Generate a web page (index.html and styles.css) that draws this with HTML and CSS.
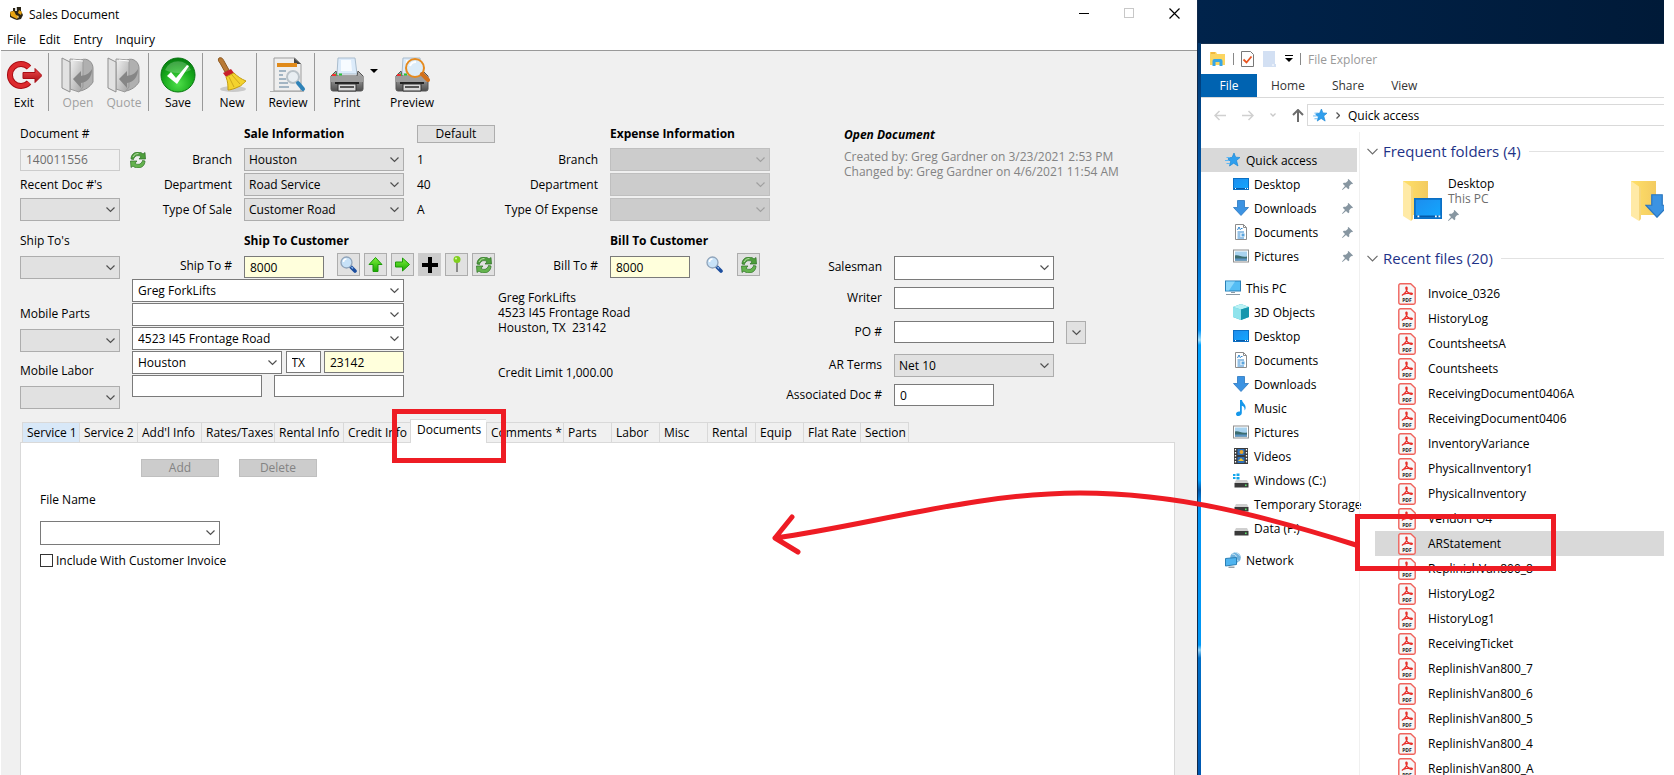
FILE: index.html
```html
<!DOCTYPE html>
<html lang="en">
<head>
<meta charset="utf-8">
<title>Sales Document</title>
<link rel="stylesheet" href="styles.css">
</head>
<body>
<svg class="defs" width="0" height="0" aria-hidden="true">
  <defs>
    <linearGradient id="g-steel" x1="0" y1="0" x2="0" y2="1"><stop offset="0" stop-color="#b9b9b9"/><stop offset=".5" stop-color="#8b8b8b"/><stop offset="1" stop-color="#4d4d4d"/></linearGradient>
    <linearGradient id="g-fold" x1="0" y1="0" x2="1" y2="1"><stop offset="0" stop-color="#f2f2f2"/><stop offset="1" stop-color="#a2a2a2"/></linearGradient>
    <radialGradient id="g-green" cx=".5" cy=".75" r=".75"><stop offset="0" stop-color="#4fe04a"/><stop offset=".6" stop-color="#16a81a"/><stop offset="1" stop-color="#067a10"/></radialGradient>
    <linearGradient id="g-red" x1="0" y1="0" x2="0" y2="1"><stop offset="0" stop-color="#ef4a4a"/><stop offset="1" stop-color="#a80d14"/></linearGradient>
    <linearGradient id="g-arrow" x1="0" y1="0" x2="0" y2="1"><stop offset="0" stop-color="#7df03c"/><stop offset="1" stop-color="#19a800"/></linearGradient>
    <linearGradient id="g-yellow" x1="0" y1="0" x2="1" y2="0"><stop offset="0" stop-color="#ffe069"/><stop offset="1" stop-color="#f3cb60"/></linearGradient>
    <linearGradient id="g-screen" x1="0" y1="0" x2="1" y2="1"><stop offset="0" stop-color="#1d8dee"/><stop offset="1" stop-color="#12a8ff"/></linearGradient>
    <symbol id="i-refresh" viewBox="0 0 16 16">
      <path d="M1 7C1 2.500 4.500 0 8 0c2 0 3.800.7 5 2l2-1.500.5 6.500H9l2-2.200C9.600 3.300 6.500 3 4.800 5 4 5.800 3.600 6.500 3.500 7.500z" fill="#4e9e3c" stroke="#2c6e24" stroke-width=".7"/>
      <path d="M15 9c0 4.500-3.500 7-7 7-2 0-3.800-.7-5-2L1 15.500.5 9H7l-2 2.200c1.400 1.500 4.500 1.800 6.200-.2.800-.8 1.200-1.500 1.300-2.500z" fill="#64b34e" stroke="#2c6e24" stroke-width=".7"/>
      <path d="M3 5c1-2.500 3.500-3.600 5.500-3.400" stroke="#bfe3ae" fill="none"/>
    </symbol>
    <symbol id="i-search" viewBox="0 0 17 17">
      <path d="M10 10l5 5" stroke="#1d4f9f" stroke-width="3.600" stroke-linecap="round"/>
      <path d="M11.500 11l1.500 1.500" stroke="#8fb8ec" stroke-width="1.200"/>
      <circle cx="6.500" cy="6.500" r="5.500" fill="#c7e2f8" stroke="#90a4ba" stroke-width="1.300"/>
      <path d="M3.500 6a3 3 0 0 1 3-3" stroke="#fff" stroke-width="1.500" fill="none"/>
    </symbol>
    <symbol id="i-star" viewBox="0 0 16 14">
      <path d="M9 0l1.600 4.200L15 4.500l-3.500 3 1.500 5.500-4.300-2.800L4.500 13l1.200-4.600L3 6.200l1-1.600h3z" fill="#2f9fee" stroke="#1a86d6" stroke-width=".7"/>
      <path d="M1.500 4.500H5M0 7.500h4M1.500 10.500H5" stroke="#5fb8f5" stroke-width="1"/>
    </symbol>
    <symbol id="i-desktop" viewBox="0 0 16 12">
      <rect x=".5" y=".5" width="15" height="11" fill="url(#g-screen)" stroke="#0b6fc4"/>
      <path d="M1 10.500h14" stroke="#065aa8"/><path d="M2 10.500h1M12 10.500h1M14 10.500h1" stroke="#fff"/>
    </symbol>
    <symbol id="i-down" viewBox="0 0 16 16">
      <path d="M4.500.5h7v7h4L8 15.500.5 7.500h4z" fill="#3c93e2" stroke="#2a76bf" stroke-width=".8"/>
    </symbol>
    <symbol id="i-doc" viewBox="0 0 16 16">
      <path d="M2.500.5h8l3 3v12h-11z" fill="#fff" stroke="#8c8c8c"/>
      <path d="M10.500.5v3h3" fill="none" stroke="#8c8c8c"/>
      <path d="M4.500 6l1.500-3 1.500 3M8 4.500h1.500M4.500 8H11M4.500 10h3M4.500 12h3M4.500 14H11" stroke="#2f86cf" fill="none"/>
      <path d="M8.500 9.500h3v3h-3z" fill="#5aa4dd"/>
    </symbol>
    <symbol id="i-pic" viewBox="0 0 16 13">
      <rect x=".5" y=".5" width="15" height="12" fill="#fff" stroke="#909090"/>
      <path d="M2 2h12v9H2z" fill="#a9d3ef"/><path d="M2 6c4-1 6 2 12 1v4H2z" fill="#3c6d70"/><path d="M2 9h12v2H2z" fill="#5d95c4"/>
    </symbol>
    <symbol id="i-pc" viewBox="0 0 16 15">
      <rect x=".5" y=".5" width="15" height="10" fill="#55bdf4" stroke="#2a7fb5"/><path d="M1 1h9l-6 9H1z" fill="#8ad7fb"/>
      <path d="M6 12h4M1 14h14" stroke="#8a9aa6" stroke-width="1.200"/>
    </symbol>
    <symbol id="i-cube" viewBox="0 0 16 16">
      <path d="M8 0l8 3v10l-8 3-8-3V3z" fill="#31b5c9"/><path d="M0 3l8 2.500V16l-8-3z" fill="#8fe3ec"/><path d="M8 0l8 3-8 2.500L0 3z" fill="#baf2f5"/><path d="M8 5.500L16 3v10l-8 3z" fill="#1596ad"/>
    </symbol>
    <symbol id="i-music" viewBox="0 0 16 16">
      <path d="M7 0h2c.2 3 4 4 3.600 8-.1 1-.6 2-1 2.400.3-2.500-.8-4-2.800-4.600V13c0 1.600-1.500 3-3.400 3C3.800 16 3 15 3 13.900c0-1.700 2-2.800 4-2.300z" fill="#1597ea"/>
    </symbol>
    <symbol id="i-video" viewBox="0 0 16 16">
      <rect x="1" y="0" width="14" height="16" fill="#3b3b3b"/><path d="M2.500 1v14M13.500 1v14" stroke="#fff" stroke-width="1.300" stroke-dasharray="1.500 1.500"/>
      <path d="M4.500 1h7v6h-7zM4.500 9h7v6h-7z" fill="#2e6fb8"/><circle cx="8.500" cy="4" r="2" fill="#e9a52c"/><path d="M5 13l3-3 3 3z" fill="#f1c12f"/>
    </symbol>
    <symbol id="i-drive" viewBox="0 0 16 16">
      <path d="M3 8h11l1.500 3H1.500z" fill="#cfcfcf"/><rect x="1.500" y="11" width="14" height="4.500" fill="#3a3a3a"/><rect x="12" y="12.500" width="1.600" height="1.600" fill="#5be36a"/>
    </symbol>
    <symbol id="i-cdrive" viewBox="0 0 16 16">
      <path d="M0 2h2.500v2H0zM3.500 1.500h3V4h-3zM0 5h2.500v2H0zM3.500 5h3v2.500h-3z" fill="#12a6ec"/>
      <path d="M3 8h11l1.500 3H1.500z" fill="#cfcfcf"/><rect x="1.500" y="11" width="14" height="4.500" fill="#3a3a3a"/><rect x="12" y="12.500" width="1.600" height="1.600" fill="#5be36a"/>
    </symbol>
    <symbol id="i-net" viewBox="0 0 16 16">
      <circle cx="10.500" cy="5.500" r="5.300" fill="#6fb1dc"/><path d="M7 2c3 0 5 2 4 4s3 2 3 4M10 0c2 1 4 2 5.500 4" stroke="#d5ebf7" fill="none"/>
      <path d="M.5 6.500l11-1v7l-11 1.500z" fill="#4fb4ef" stroke="#2a7fb5"/><path d="M3.500 15.200h6" stroke="#7b8a94" stroke-width="1.200"/>
    </symbol>
    <symbol id="i-pin" viewBox="0 0 11 11">
      <path d="M6.500 0L11 4.500l-1 .8-.8-.2-2 2.200.1 2L6.300 10.200 4 8 .5 11 0 10.500 3 7 .8 4.700l1-1 2 .1L6 1.800 5.700.8z" fill="#8796a1"/>
    </symbol>
    <symbol id="i-chev" viewBox="0 0 11 7"><path d="M.5.8l5 5 5-5" fill="none" stroke="#6b6b6b" stroke-width="1.200"/></symbol>
    <symbol id="i-pdf" viewBox="0 0 18 22">
      <path d="M2.500.8h10.200L17.200 5v14.500a1.700 1.700 0 0 1-1.700 1.700h-13A1.700 1.700 0 0 1 .8 19.500v-17A1.700 1.700 0 0 1 2.500.8z" fill="#f6f6f6" stroke="#f0635c" stroke-width="1.400"/>
      <path d="M4.500 12c2.800-1.500 5-5 4.600-7.200-.2-1.300-1.500-.8-1.200.6.500 2.400 2.500 5 5.300 5.900 1.400.3 1.700-1 .2-1.200-2.700-.2-5.800.2-8.300 1.400-.8.500-1 .9-.6.500z" fill="none" stroke="#e8302a" stroke-width="1.300"/>
      <text x="9" y="19" text-anchor="middle" class="pdf-tag">PDF</text>
    </symbol>
    <symbol id="i-folder" viewBox="0 0 25 40">
      <path d="M0 0h25v34H0z" fill="url(#g-yellow)"/><path d="M0 0l8 5.500V40l-8-5z" fill="#ffeaa6"/><path d="M8 5.500l2 1.500v31l-2 2z" fill="#f6d67a"/>
    </symbol>
    <symbol id="i-openbook" viewBox="0 0 34 36">
      <path d="M20 3c7-3 12 3 12 8v14c-3 5-8 8-13 9z" fill="#b0b0b0" stroke="#909090"/>
      <path d="M9 2l13 1v27l-4 5-9-3z" fill="url(#g-fold)" stroke="#9a9a9a"/>
      <path d="M1 1l8 4v30l-8-4z" fill="#e2e2e2" stroke="#8f8f8f"/>
      <path d="M20 14l-8 8 8 9v-5c6-1 11-5 11-14-3 5-6 6-11 7z" fill="#868686"/>
      <path d="M12 3l10 1" stroke="#fff"/>
    </symbol>
    <symbol id="i-printer" viewBox="0 0 36 36">
      <path d="M9 1h17l2 16H8z" fill="#dcebfa" stroke="#a9bccd"/><path d="M12 3h10l1 11H12z" fill="#f7fbff"/>
      <path d="M7 14L2 19v13a2 2 0 0 0 2 2h28a2 2 0 0 0 2-2V19l-5-5-1 5H8z" fill="url(#g-steel)" stroke="#555"/>
      <path d="M1 19h34v6H1z" fill="#9d9d9d"/><path d="M3 18l5-.5M10 17.500h3" stroke="#2bc13a" stroke-width="2"/><path d="M3 18h4" stroke="#e33" stroke-width="2"/>
      <path d="M6 25h24v2H6z" fill="#222"/><path d="M9 27h18v7H9z" fill="#d9d9d9" stroke="#333"/><path d="M11 30h14" stroke="#555" stroke-width="2"/>
    </symbol>
  </defs>
</svg>

<div class="screen">
<main class="app">
  <header class="titlebar">
    <svg width="15" height="14" viewBox="0 0 15 14"><path d="M1 5l3-1V1h2v3l2-4h4v4l2 4-2 4-4 1-3-1-4-2z" fill="#2a2416"/><path d="M1 5l4-1 2 4 3 1-2 3-6-3zM10 3l3 2-1 3-3-2z" fill="#e8a413"/><path d="M6 1h2v3H6zM8 9l2 1-1 1z" fill="#d8d8d8"/></svg>
    <h1>Sales Document</h1>
    <div class="winbtns">
      <button type="button" aria-label="Minimize"><svg width="11" height="11"><path d="M0 5.500h10" stroke="#000"/></svg></button>
      <button type="button" aria-label="Maximize" disabled><svg width="11" height="11"><rect x=".5" y=".5" width="9" height="9" fill="none" stroke="#c8c8c8"/></svg></button>
      <button type="button" aria-label="Close"><svg width="11" height="11"><path d="M.5.500l10 10m0-10l-10 10" stroke="#000" stroke-width="1.200"/></svg></button>
    </div>
  </header>
  <nav class="menu"><a href="#">File</a><a href="#">Edit</a><a href="#">Entry</a><a href="#">Inquiry</a></nav>

  <div class="toolbar">
    <button type="button" class="tool"><svg width="36" height="36" viewBox="0 0 36 36"><path d="M23 10.500a11 11 0 1 0 0 15" fill="none" stroke="#a80d14" stroke-width="6"/><path d="M23 10.500a11 11 0 1 0 0 15" fill="none" stroke="#dd2a2e" stroke-width="4"/><path d="M17 15.500h12v-4l7 7-7 7v-4H17z" fill="url(#g-red)" stroke="#a80d14"/></svg>Exit</button>
    <i class="sep"></i>
    <button type="button" class="tool" disabled><svg width="34" height="36"><use href="#i-openbook"/></svg>Open</button>
    <button type="button" class="tool" disabled><svg width="34" height="36"><use href="#i-openbook"/></svg>Quote</button>
    <i class="sep"></i>
    <button type="button" class="tool"><svg width="36" height="36" viewBox="0 0 36 36"><circle cx="18" cy="18" r="17" fill="url(#g-green)" stroke="#06770f"/><path d="M5 13a14 14 0 0 1 26 0c-8 4-18 4-26 0z" fill="#fff" opacity=".22"/><path d="M7 19l4-4 5 6L27 8l2 1-12 18z" fill="#fff"/></svg>Save</button>
    <i class="sep"></i>
    <button type="button" class="tool"><svg width="30" height="36" viewBox="0 0 30 36"><ellipse cx="16" cy="32" rx="13" ry="3" fill="#c9c9c9"/><path d="M2 1c3-1 4 1 5 3l5 9-4 2-5-9C1 4 1 2 2 1z" fill="#b97a35" stroke="#8d5a22"/><path d="M6 16l8-4 3 4-8 4z" fill="#c8202a"/><path d="M9 20l8-4c3 3 7 6 12 8-3 2-4 5-8 6-4 2-8 3-10 3 0-4 0-8-2-13z" fill="#f4d32e" stroke="#c39c12"/><path d="M12 20l5 10M15 18l8 9" stroke="#cfa81c"/></svg>New</button>
    <i class="sep"></i>
    <button type="button" class="tool wide"><svg width="36" height="36" viewBox="0 0 36 36"><path d="M4 1h21l6 6v27H4z" fill="#eeeeee" stroke="#9d9d9d"/><path d="M24 1v6h7z" fill="#444"/><path d="M7 6h20v4H7z" fill="#e08a1a"/><path d="M9 14h7M9 18h4M9 22h7M9 26h9M9 30h10" stroke="#8ba2b5" stroke-width="1.500"/><circle cx="23" cy="20" r="6" fill="#e8eef2" stroke="#b9c2c8" stroke-width="2"/><path d="M28 26l5 6" stroke="#2f83b8" stroke-width="4" stroke-linecap="round"/><path d="M0 34.500h34" stroke="#b0b0b0"/></svg>Review</button>
    <i class="sep"></i>
    <button type="button" class="tool print"><svg width="36" height="36"><use href="#i-printer"/></svg>Print</button>
    <button type="button" class="drop" aria-label="Print options"><svg width="8" height="4"><path d="M0 0h8l-4 4z"/></svg></button>
    <button type="button" class="tool preview"><svg width="36" height="36" viewBox="0 0 36 36"><use href="#i-printer" width="36" height="36"/><circle cx="21" cy="11" r="9" fill="#dcecf8" stroke="#e58a1f" stroke-width="2"/><path d="M16 9a6 6 0 0 1 6-4" stroke="#fff" stroke-width="2" fill="none"/><path d="M28 17l6 6" stroke="#d2701a" stroke-width="4" stroke-linecap="round"/></svg>Preview</button>
  </div>

  <form class="form">
    <div class="band band-doc">
      <label class="a" for="docno">Document #</label>
      <strong class="f1">Sale Information</strong>
      <button type="button" class="btn v1">Default</button>
      <strong class="f2">Expense Information</strong>

      <input class="a" id="docno" value="140011556" disabled>
      <svg class="refresh" width="16" height="16"><use href="#i-refresh"/></svg>
      <label class="l1" for="s-branch">Branch</label><select class="f1" id="s-branch"><option>Houston</option></select><span class="v1">1</span>
      <label class="l2" for="e-branch">Branch</label><select class="f2" id="e-branch" disabled><option></option></select>

      <label class="a" for="recent">Recent Doc #'s</label>
      <label class="l1" for="s-dept">Department</label><select class="f1" id="s-dept"><option>Road Service</option></select><span class="v1">40</span>
      <label class="l2" for="e-dept">Department</label><select class="f2" id="e-dept" disabled><option></option></select>

      <select class="a" id="recent"><option></option></select>
      <label class="l1" for="s-type">Type Of Sale</label><select class="f1" id="s-type"><option>Customer Road</option></select><span class="v1">A</span>
      <label class="l2" for="e-type">Type Of Expense</label><select class="f2" id="e-type" disabled><option></option></select>

      <div class="status"><h2>Open Document</h2><p>Created by: Greg Gardner on 3/23/2021 2:53 PM<br>Changed by: Greg Gardner on 4/6/2021 11:54 AM</p></div>
    </div>

    <div class="band band-cust">
      <div class="picks">
        <div class="pick"><label for="shiptos">Ship To's</label><select id="shiptos"><option></option></select></div>
        <div class="pick"><label for="mparts">Mobile Parts</label><select id="mparts"><option></option></select></div>
        <div class="pick"><label for="mlabor">Mobile Labor</label><select id="mlabor"><option></option></select></div>
      </div>

      <div class="ship">
        <strong>Ship To Customer</strong>
        <div class="lookup">
          <label for="shipno">Ship To #</label><input class="key" id="shipno" value="8000">
          <div class="icons">
            <button type="button" class="ico" aria-label="Find"><svg width="17" height="17"><use href="#i-search"/></svg></button>
            <button type="button" class="ico" aria-label="Up"><svg width="15" height="15" viewBox="0 0 15 15"><path d="M7.500.5l6.500 7h-4v7H5v-7H1z" fill="url(#g-arrow)" stroke="#1d9a08"/></svg></button>
            <button type="button" class="ico" aria-label="Next"><svg width="15" height="15" viewBox="0 0 15 15"><path d="M14.500 7.500l-7 6.500v-4h-7V5h7V1z" fill="url(#g-arrow)" stroke="#1d9a08"/></svg></button>
            <button type="button" class="ico dark" aria-label="Add"><svg width="16" height="16"><path d="M8 0v16M0 8h16" stroke="#000" stroke-width="4"/></svg></button>
            <button type="button" class="ico" aria-label="Map"><svg width="8" height="17"><path d="M4 6v10" stroke="#8a8a8a" stroke-width="2"/><circle cx="4" cy="3.500" r="3.500" fill="#7fcf1d"/><circle cx="3" cy="2.500" r="1" fill="#e0f8b0"/></svg></button>
            <button type="button" class="ico" aria-label="Refresh"><svg width="16" height="16"><use href="#i-refresh"/></svg></button>
          </div>
        </div>
        <div class="addr">
          <select class="edit" aria-label="Name"><option>Greg ForkLifts</option></select>
          <select class="edit" aria-label="Address 1"><option></option></select>
          <select class="edit" aria-label="Address 2"><option>4523 I45 Frontage Road</option></select>
          <div class="city"><select class="edit" aria-label="City"><option>Houston</option></select><input aria-label="State" value="TX"><input class="key" aria-label="Zip" value="23142"></div>
          <div class="pair"><input aria-label="Contact"><input aria-label="Phone"></div>
        </div>
      </div>

      <div class="bill">
        <strong>Bill To Customer</strong>
        <div class="lookup">
          <label for="billno">Bill To #</label><input class="key" id="billno" value="8000">
          <div class="icons">
            <button type="button" class="ico flat" aria-label="Find"><svg width="17" height="17"><use href="#i-search"/></svg></button>
            <button type="button" class="ico" aria-label="Refresh"><svg width="16" height="16"><use href="#i-refresh"/></svg></button>
          </div>
        </div>
        <address>Greg ForkLifts<br>4523 I45 Frontage Road<br>Houston, TX&nbsp; 23142</address>
        <p class="credit">Credit Limit 1,000.00</p>
      </div>

      <div class="terms">
        <label for="sman">Salesman</label><select class="edit tall" id="sman"><option></option></select>
        <label for="writer">Writer</label><input id="writer">
        <label for="po">PO #</label><input id="po"><select class="mini" aria-label="PO list"><option></option></select>
        <label for="ar">AR Terms</label><select id="ar"><option>Net 10</option></select>
        <label for="assoc">Associated Doc #</label><input class="short" id="assoc" value="0">
      </div>
    </div>
  </form>

  <div class="tabs" role="tablist">
    <button type="button" role="tab" class="hot">Service 1</button><button type="button" role="tab">Service 2</button><button type="button" role="tab">Add'l Info</button><button type="button" role="tab">Rates/Taxes</button><button type="button" role="tab">Rental Info</button><button type="button" role="tab">Credit Info</button><button type="button" role="tab" class="on" aria-selected="true">Documents</button><button type="button" role="tab">Comments *</button><button type="button" role="tab">Parts</button><button type="button" role="tab">Labor</button><button type="button" role="tab">Misc</button><button type="button" role="tab">Rental</button><button type="button" role="tab">Equip</button><button type="button" role="tab">Flat Rate</button><button type="button" role="tab">Section</button>
  </div>
  <section class="panel" role="tabpanel">
    <div class="actions"><button type="button" class="btn" disabled>Add</button><button type="button" class="btn" disabled>Delete</button></div>
    <label for="fname">File Name</label>
    <select class="edit tall" id="fname"><option></option></select>
    <label class="check"><input type="checkbox">Include With Customer Invoice</label>
  </section>
</main>

<div class="desk">
<aside class="explorer">
  <header class="etitle">
    <svg width="17" height="15" viewBox="0 0 17 15"><path d="M1 0h6l1 2h8v11H1z" fill="#fbd561"/><path d="M2 1h4" stroke="#e89c1c"/><path d="M3.500 14V9a2 2 0 0 1 2-2h6a2 2 0 0 1 2 2v5h-3v-4h-4v4z" fill="#36a6e6"/></svg>
    <i></i>
    <svg width="13" height="16" viewBox="0 0 13 16"><path d="M.5.5h9l3 3v12H.5z" fill="#fdfdfd" stroke="#777"/><path d="M2.500 8.500l3 3 5-6" fill="none" stroke="#e8531f" stroke-width="1.800"/></svg>
    <svg width="13" height="16" viewBox="0 0 13 16"><path d="M0 0h12v13h1v3H0z" fill="#d3e0f3"/><path d="M9 14h2" stroke="#fff"/></svg>
    <svg width="8" height="8" viewBox="0 0 8 8"><path d="M0 .5h8" stroke="#000"/><path d="M0 3h8L4 7z"/></svg>
    <i></i>
    <h2>File Explorer</h2>
  </header>
  <nav class="ribbon"><a href="#" class="file">File</a><a href="#">Home</a><a href="#">Share</a><a href="#">View</a></nav>
  <div class="where">
    <svg width="12" height="11" viewBox="0 0 12 11"><path d="M5.500 1L1 5.500 5.500 10M1 5.500h11" fill="none" stroke="#d0d0d0" stroke-width="1.500"/></svg>
    <svg width="12" height="11" viewBox="0 0 12 11"><path d="M6.500 1L11 5.500 6.500 10M11 5.500H0" fill="none" stroke="#d0d0d0" stroke-width="1.500"/></svg>
    <svg width="6" height="4" viewBox="0 0 6 4"><path d="M.5.5L3 3 5.500.5" fill="none" stroke="#c8c8c8" stroke-width="1.300"/></svg>
    <svg width="12" height="13" viewBox="0 0 12 13"><path d="M1 6l5-5 5 5M6 1v12" fill="none" stroke="#6c6c6c" stroke-width="2"/></svg>
    <div class="path"><svg width="15" height="13"><use href="#i-star"/></svg><svg width="4" height="7" viewBox="0 0 4 7"><path d="M.5.5l3 3-3 3" fill="none" stroke="#555" stroke-width="1.300"/></svg>Quick access</div>
  </div>
  <div class="ebody">
    <nav class="tree">
      <a href="#" class="root cur"><svg><use href="#i-star"/></svg><span>Quick access</span></a>
      <a href="#"><svg><use href="#i-desktop"/></svg><span>Desktop</span><svg class="pin"><use href="#i-pin"/></svg></a>
      <a href="#"><svg><use href="#i-down"/></svg><span>Downloads</span><svg class="pin"><use href="#i-pin"/></svg></a>
      <a href="#"><svg><use href="#i-doc"/></svg><span>Documents</span><svg class="pin"><use href="#i-pin"/></svg></a>
      <a href="#"><svg><use href="#i-pic"/></svg><span>Pictures</span><svg class="pin"><use href="#i-pin"/></svg></a>
      <a href="#" class="root"><svg><use href="#i-pc"/></svg><span>This PC</span></a>
      <a href="#"><svg><use href="#i-cube"/></svg><span>3D Objects</span></a>
      <a href="#"><svg><use href="#i-desktop"/></svg><span>Desktop</span></a>
      <a href="#"><svg><use href="#i-doc"/></svg><span>Documents</span></a>
      <a href="#"><svg><use href="#i-down"/></svg><span>Downloads</span></a>
      <a href="#"><svg><use href="#i-music"/></svg><span>Music</span></a>
      <a href="#"><svg><use href="#i-pic"/></svg><span>Pictures</span></a>
      <a href="#"><svg><use href="#i-video"/></svg><span>Videos</span></a>
      <a href="#"><svg><use href="#i-cdrive"/></svg><span>Windows (C:)</span></a>
      <a href="#"><svg><use href="#i-drive"/></svg><span>Temporary Storage</span></a>
      <a href="#"><svg><use href="#i-drive"/></svg><span>Data (F:)</span></a>
      <a href="#" class="root"><svg><use href="#i-net"/></svg><span>Network</span></a>
    </nav>
    <div class="content">
      <h3><svg width="11" height="7"><use href="#i-chev"/></svg>Frequent folders (4)</h3>
      <div class="folders">
        <a href="#" class="folder"><svg width="40" height="40" viewBox="0 0 40 40"><use href="#i-folder" width="25" height="40"/><use href="#i-desktop" x="11" y="17" width="28" height="21"/></svg><span>Desktop<small>This PC</small><svg width="11" height="11"><use href="#i-pin"/></svg></span></a>
        <a href="#" class="folder" aria-label="Downloads"><svg width="40" height="40" viewBox="0 0 40 40"><use href="#i-folder" width="25" height="40"/><use href="#i-down" x="14" y="13" width="24" height="24"/></svg></a>
      </div>
      <h3><svg width="11" height="7"><use href="#i-chev"/></svg>Recent files (20)</h3>
      <ul class="files">
        <li><svg><use href="#i-pdf"/></svg>Invoice_0326</li>
        <li><svg><use href="#i-pdf"/></svg>HistoryLog</li>
        <li><svg><use href="#i-pdf"/></svg>CountsheetsA</li>
        <li><svg><use href="#i-pdf"/></svg>Countsheets</li>
        <li><svg><use href="#i-pdf"/></svg>ReceivingDocument0406A</li>
        <li><svg><use href="#i-pdf"/></svg>ReceivingDocument0406</li>
        <li><svg><use href="#i-pdf"/></svg>InventoryVariance</li>
        <li><svg><use href="#i-pdf"/></svg>PhysicalInventory1</li>
        <li><svg><use href="#i-pdf"/></svg>PhysicalInventory</li>
        <li><svg><use href="#i-pdf"/></svg>VendorPO4</li>
        <li class="sel"><svg><use href="#i-pdf"/></svg>ARStatement</li>
        <li><svg><use href="#i-pdf"/></svg>ReplinishVan800_8</li>
        <li><svg><use href="#i-pdf"/></svg>HistoryLog2</li>
        <li><svg><use href="#i-pdf"/></svg>HistoryLog1</li>
        <li><svg><use href="#i-pdf"/></svg>ReceivingTicket</li>
        <li><svg><use href="#i-pdf"/></svg>ReplinishVan800_7</li>
        <li><svg><use href="#i-pdf"/></svg>ReplinishVan800_6</li>
        <li><svg><use href="#i-pdf"/></svg>ReplinishVan800_5</li>
        <li><svg><use href="#i-pdf"/></svg>ReplinishVan800_4</li>
        <li><svg><use href="#i-pdf"/></svg>ReplinishVan800_A</li>
      </ul>
    </div>
  </div>
</aside>
</div>
</div>

<svg class="markup" width="1674" height="775" viewBox="0 0 1674 775" aria-hidden="true">
  <g fill="none" stroke="#ee1c24" stroke-width="5">
    <rect x="394.500" y="411.500" width="109" height="49"/>
    <rect x="1357.500" y="516.500" width="196" height="52"/>
    <path stroke-linecap="round" stroke-linejoin="round" d="M1356 545C1270 518 1180 493 1080 493C975 493 870 525 775 538M792 517L775 538L798 552"/>
  </g>
</svg>
</body>
</html>
```
FILE: styles.css
```css
* { box-sizing: border-box; }
body {
  margin: 0;
  height: 100vh;
  overflow: hidden;
  background: #fff;
  color: #000;
  font: 12px/15px "Open Sans", "Noto Sans", sans-serif;
}
button, input, select { font: inherit; color: inherit; margin: 0; }
h1, h2, h3, p { margin: 0; font-size: 12px; font-weight: 400; }
a { color: inherit; text-decoration: none; }
label, strong, button, span { white-space: nowrap; }
.defs { position: absolute; }
.markup { position: absolute; top: 0; left: 0; z-index: 2; pointer-events: none; }

.screen { display: grid; grid-template-columns: minmax(0, 1fr) 467px; height: 100%; padding-right: 10px; }

/* Sales document window */
.app { display: flex; flex-direction: column; min-height: 0; background: #f0f0f0; border-left: 1px solid #fff; }
.titlebar { display: flex; align-items: center; height: 28px; padding-left: 8px; background: #fff; }
.titlebar h1 { margin-left: 5px; flex: 1; }
.winbtns { display: flex; }
.winbtns button { width: 45px; height: 28px; padding: 0; border: 0; background: none; }
.menu { display: flex; gap: 13px; height: 23px; padding: 4px 6px 0; background: #fff; border-bottom: 1px solid #999; }

.toolbar { display: flex; height: 61px; padding-top: 2px; }
.tool { display: flex; flex-direction: column; align-items: center; gap: 2px; width: 46px; padding: 4px 0 0; border: 0; background: none; }
.tool:disabled { color: #a0a0a0; }
.wide { width: 50px; }
.print { width: 44px; margin-left: 4px; }
.preview { width: 66px; }
.sep { width: 1px; height: 58px; margin: 0 6px 0 1px; background: #999; }
.drop { align-self: flex-start; width: 10px; padding: 14px 0 0; border: 0; background: none; line-height: 4px; }

.form { padding: 9px 19px 0; }
.btn { width: 78px; height: 18px; padding: 0; background: #e1e1e1; border: 1px solid #adadad; line-height: 16px; }
.btn:disabled { background: #ccc; border-color: #bfbfbf; color: #838383; }
input, select { width: 100%; height: 22px; padding: 0 5px; border: 1px solid #7a7a7a; border-radius: 0; background: #fff; }
input:disabled { background: #f0f0f0; border-color: #ccc; color: #6d6d6d; }
select {
  appearance: none;
  height: 23px;
  padding: 0 20px 0 4px;
  border-color: #adadad;
  background: #e1e1e1 url("data:image/svg+xml,%3Csvg xmlns='http://www.w3.org/2000/svg' width='9' height='6'%3E%3Cpath d='M.5.5l4 4 4-4' fill='none' stroke='%23505050' stroke-width='1.200'/%3E%3C/svg%3E") no-repeat right 4px center;
}
select:disabled { opacity: 1; border-color: #bfbfbf; background-color: #ccc; background-image: url("data:image/svg+xml,%3Csvg xmlns='http://www.w3.org/2000/svg' width='9' height='6'%3E%3Cpath d='M.5.5l4 4 4-4' fill='none' stroke='%23a0a0a0' stroke-width='1.200'/%3E%3C/svg%3E"); }
select.edit { background-color: #fff; border-color: #7a7a7a; padding-left: 5px; }
select.tall { height: 24px; }
.key { background: #ffffdc; }

.band-doc {
  display: grid;
  grid-template-columns: 100px 26px 86px 12px 160px 13px 78px 103px 12px 160px 74px auto;
  grid-template-rows: 25px repeat(3, 23px);
  row-gap: 2px;
  align-items: center;
  justify-content: start;
}
.a { grid-column: 1; }
.refresh { grid-column: 2; justify-self: end; }
.l1 { grid-column: 3; justify-self: end; }
.f1 { grid-column: 5; }
.v1 { grid-column: 7; }
.l2 { grid-column: 8; justify-self: end; }
.f2 { grid-column: 10; }
.status { grid-column: 12; grid-row: 1 / span 3; align-self: start; padding-top: 6px; white-space: nowrap; }
.status h2 { font-weight: 700; font-style: italic; margin-bottom: 7px; }
.status p { color: #838383; }

.band-cust { display: flex; padding-top: 11px; }
.picks { width: 112px; padding-right: 12px; }
.pick { display: flex; flex-direction: column; gap: 6px; margin-bottom: 10px; line-height: 18px; }
.pick:first-child { margin-bottom: 26px; }
.pick:last-child { margin-bottom: 0; }
.ship { width: 366px; }
.ship strong, .bill strong { display: block; margin-left: 112px; line-height: 18px; }
.lookup { display: flex; height: 26px; margin-top: 3px; }
.lookup label { width: 100px; text-align: right; line-height: 26px; }
.lookup input { width: 80px; margin: 3px 0 0 12px; }
.icons { display: flex; gap: 4px; margin-left: 13px; }
.ico { display: grid; place-items: center; width: 23px; height: 23px; padding: 0; border: 1px solid #adadad; background: #e1e1e1; }
.dark { background: #ccc; border-color: #ccc; }
.flat { background: none; border-color: transparent; }
.addr { display: flex; flex-direction: column; gap: 1px; width: 272px; }
.city { display: grid; grid-template-columns: 150px 35px 80px; justify-content: space-between; }
.pair { display: grid; grid-template-columns: 1fr 1fr; column-gap: 12px; }
.bill { width: 262px; }
.bill .icons { gap: 11px; }
address { margin-top: 11px; font-style: normal; white-space: pre; }
.credit { margin-top: 30px; }
.terms { display: grid; grid-template-columns: 122px 160px 20px; column-gap: 12px; grid-template-rows: 31px 34px 33px 30px 22px; padding-top: 24px; }
.terms label { grid-column: 1; text-align: right; line-height: 22px; }
.short { width: 100px; }
.mini { padding: 0; background-position: center; }

/* Tabs */
.tabs {
  display: grid;
  grid-template-columns: 57px 58px 64px 73px 69px 67px 76px 77px repeat(5, 48px) 57px 49px;
  align-items: end;
  height: 23px;
  margin: 10px 0 0 21px;
}
.tabs button { height: 20px; padding: 0 0 0 4px; border: 1px solid #d9d9d9; border-width: 1px 0 0 1px; background: #f0f0f0; text-align: left; line-height: 18px; }
.tabs button:last-child { border-right-width: 1px; }
.tabs .hot { background: #d8e8f8; }
.tabs .on { position: relative; height: 24px; margin-bottom: -1px; background: #fff; padding: 0 0 3px 6px; }
.panel { display: flex; flex: 1; flex-direction: column; align-items: flex-start; margin: 0 22px 0 19px; padding: 16px 19px; background: #fff; border: 1px solid #d9d9d9; border-bottom: 0; }
.actions { display: flex; gap: 20px; margin: 0 0 15px 101px; }
.panel select { width: 180px; margin: 14px 0 8px; }
.check { display: flex; align-items: center; gap: 3px; }
.check input { appearance: none; width: 13px; height: 13px; padding: 0; border-color: #333; }

/* File explorer on the desktop */
.desk {
  min-height: 0;
  padding: 43px 0 0 4px;
  border-left: 1px solid #10294a;
  background: linear-gradient(90deg, #00234b, #001a38) top / 100% 43px no-repeat,
    linear-gradient(#00366c 40px, #0057a8 180px, #0091f5 330px, #9be0ff 340px, #00a2ff 345px, #00a2ff 480px, #0057a8 490px, #0095f5 505px, #0098f5 645px, #8fd4f8 650px, #0070c8 658px, #0057b0);
}
.explorer { display: flex; flex-direction: column; height: 100%; overflow: hidden; margin-left: -1px; background: #fff; border-top: 1px solid #16304f; }
.etitle { display: flex; flex: none; align-items: center; height: 30px; padding-left: 8px; gap: 7px; color: #999; }
.etitle i { width: 1px; height: 12px; background: #888; }
.etitle svg + svg { margin-left: 2px; }
.ribbon { display: flex; flex: none; height: 24px; border-bottom: 1px solid #d9d9d9; line-height: 23px; color: #333; }
.ribbon a { padding: 0 13px 0 14px; }
.ribbon .file { width: 56px; padding: 0; background: #0063b1; color: #fff; text-align: center; }
.where { display: flex; flex: none; align-items: center; gap: 16px; height: 34px; padding-left: 13px; }
.path { display: flex; flex: 1; align-items: center; gap: 8px; height: 22px; margin-left: -13px; padding-left: 5px; border: 1px solid #d9d9d9; border-right: 0; }
.ebody { display: flex; flex: 1; min-height: 0; }
.tree { width: 156px; padding-top: 16px; }
.tree a { display: flex; align-items: center; gap: 5px; height: 24px; padding: 0 4px 0 32px; }
.tree .root { margin-top: 8px; padding-left: 24px; }
.tree .cur { margin-top: 0; background: #d9d9d9; }
.tree svg { flex: none; width: 16px; height: 16px; }
.tree span { flex: 1; }
.tree svg.pin { width: 11px; height: 11px; }
.content { flex: 1; min-width: 0; margin-left: 2px; border-left: 1px solid #f0f0f0; padding: 8px 0 0 7px; overflow: hidden; }
h3 { display: flex; align-items: center; gap: 5px; height: 22px; font-size: 15px; line-height: 22px; color: #1e3287; white-space: nowrap; }
h3::after { content: ""; flex: 1; height: 1px; margin-left: 3px; background: #e2e2e2; }
.folders { display: flex; gap: 20px; height: 85px; padding: 19px 0 0 36px; overflow: hidden; }
.folder { display: flex; flex: none; gap: 5px; width: 208px; }
.folder span { display: flex; flex-direction: column; margin-top: -5px; }
.folder small { font-size: 12px; color: #6d6d6d; margin-bottom: 4px; }
.files { list-style: none; margin: 12px 0 0; padding: 0 0 0 8px; }
.files li { display: flex; align-items: center; gap: 12px; height: 25px; padding-left: 23px; }
.files svg { width: 18px; height: 22px; }
.files .sel { background: #d9d9d9; }
.pdf-tag { font: 700 5px "Open Sans", sans-serif; fill: #222; }
```
